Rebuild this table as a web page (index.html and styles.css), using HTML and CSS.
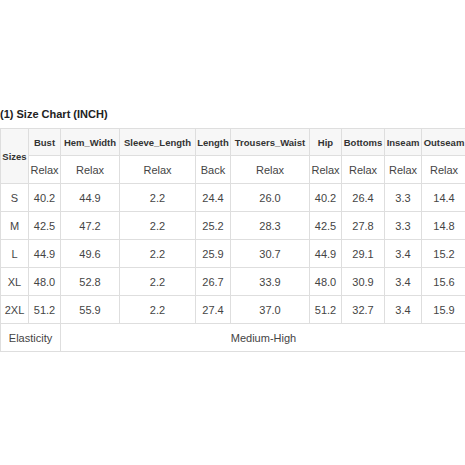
FILE: index.html
```html
<!DOCTYPE html>
<html>
<head>
<meta charset="utf-8">
<link rel="stylesheet" href="styles.css">
</head>
<body>
<div class="page">
  <div class="title">(1) Size Chart (INCH)</div>
  <table class="chart">
    <colgroup>
      <col class="c1"><col class="c2"><col class="c3"><col class="c4"><col class="c5">
      <col class="c6"><col class="c7"><col class="c8"><col class="c9"><col class="c10">
    </colgroup>
    <tr class="head">
      <th rowspan="2" class="sizes">Sizes</th>
      <th>Bust</th><th>Hem_Width</th><th>Sleeve_Length</th><th>Length</th><th>Trousers_Waist</th><th>Hip</th><th>Bottoms</th><th>Inseam</th><th>Outseam</th>
    </tr>
    <tr class="sub">
      <td>Relax</td><td>Relax</td><td>Relax</td><td>Back</td><td>Relax</td><td>Relax</td><td>Relax</td><td>Relax</td><td>Relax</td>
    </tr>
    <tr><td>S</td><td>40.2</td><td>44.9</td><td>2.2</td><td>24.4</td><td>26.0</td><td>40.2</td><td>26.4</td><td>3.3</td><td>14.4</td></tr>
    <tr><td>M</td><td>42.5</td><td>47.2</td><td>2.2</td><td>25.2</td><td>28.3</td><td>42.5</td><td>27.8</td><td>3.3</td><td>14.8</td></tr>
    <tr><td>L</td><td>44.9</td><td>49.6</td><td>2.2</td><td>25.9</td><td>30.7</td><td>44.9</td><td>29.1</td><td>3.4</td><td>15.2</td></tr>
    <tr><td>XL</td><td>48.0</td><td>52.8</td><td>2.2</td><td>26.7</td><td>33.9</td><td>48.0</td><td>30.9</td><td>3.4</td><td>15.6</td></tr>
    <tr><td>2XL</td><td>51.2</td><td>55.9</td><td>2.2</td><td>27.4</td><td>37.0</td><td>51.2</td><td>32.7</td><td>3.4</td><td>15.9</td></tr>
    <tr><td colspan="2">Elasticity</td><td colspan="8">Medium-High</td></tr>
  </table>
</div>
</body>
</html>
```
FILE: styles.css
```css
html, body {
  margin: 0;
  padding: 0;
  background: #fff;
  overflow: hidden;
}
.page {
  width: 465px;
  height: 465px;
  overflow: hidden;
  padding-top: 107px;
  box-sizing: border-box;
  font-family: "Liberation Sans", Arial, sans-serif;
  color: #333;
}
.title {
  font-size: 11px;
  font-weight: bold;
  line-height: 14px;
  height: 21px;
  padding-left: 0;
  color: #222;
}
.chart {
  border-collapse: collapse;
  table-layout: fixed;
  width: 466px;
  margin-left: 0;
}
.c1 { width: 28px; }
.c2 { width: 32px; }
.c3 { width: 59px; }
.c4 { width: 76px; }
.c5 { width: 35px; }
.c6 { width: 79px; }
.c7 { width: 32px; }
.c8 { width: 43px; }
.c9 { width: 37px; }
.c10 { width: 45px; }
.chart th, .chart td {
  border: 1px solid #dedede;
  text-align: center;
  padding: 0;
  white-space: nowrap;
  overflow: hidden;
}
.chart th {
  font-size: 9.5px;
  font-weight: bold;
  background: #f7f7f7;
  color: #333;
  height: 26px;
}
.chart td {
  font-size: 11px;
  color: #444;
  height: 27px;
}
.chart .sizes {
  background: #f7f7f7;
}
```
